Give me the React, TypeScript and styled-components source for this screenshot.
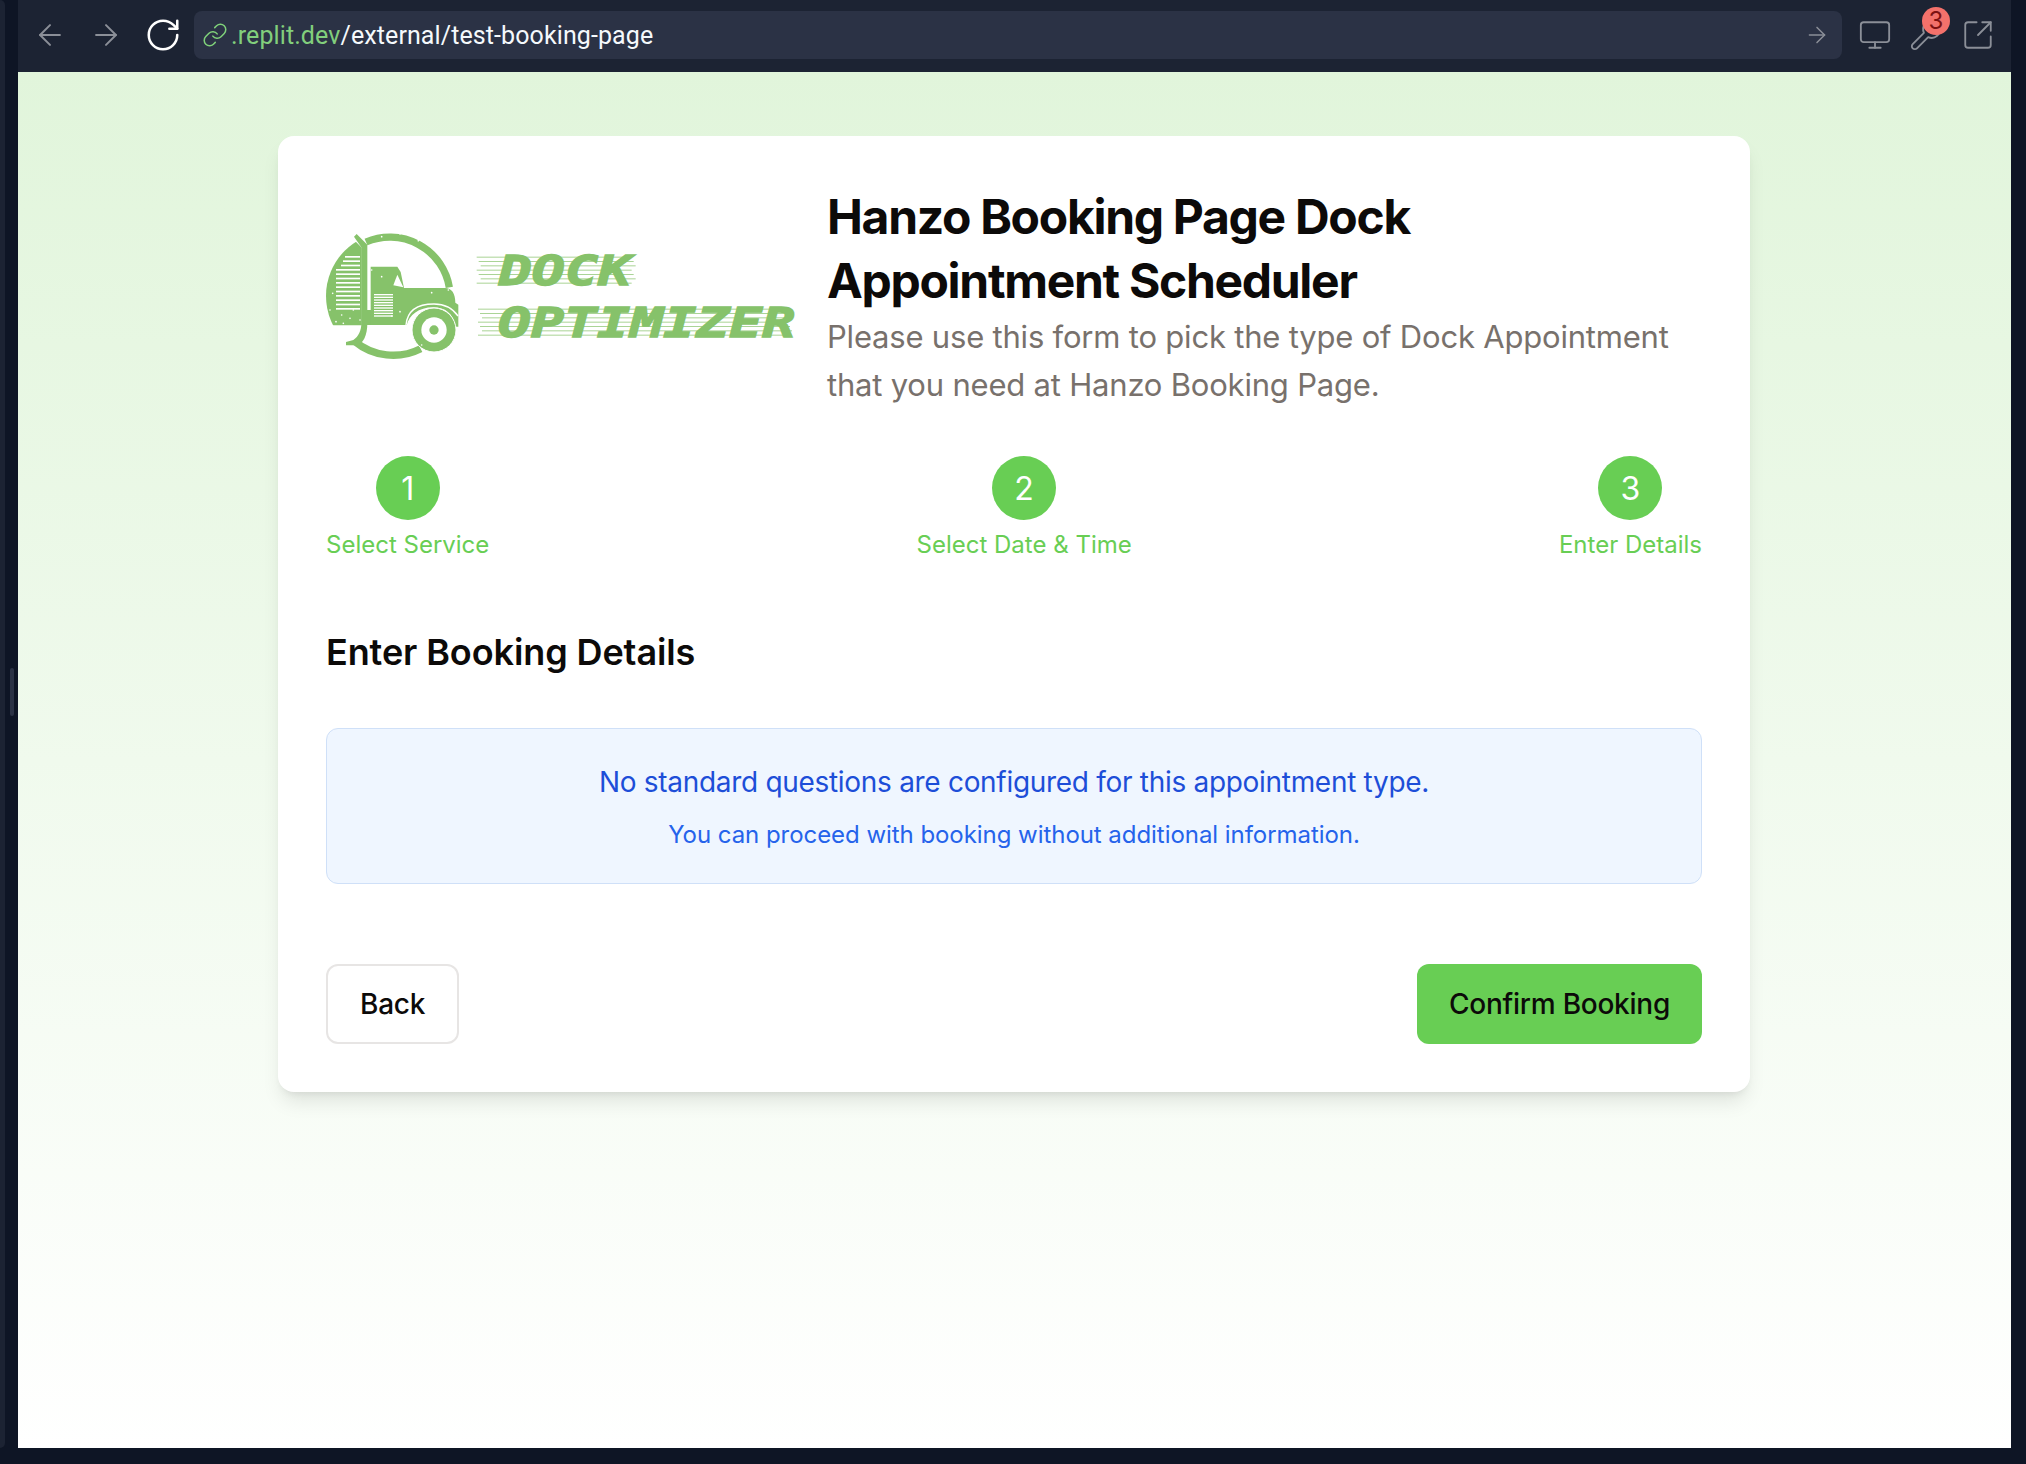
import React from 'react';
import styled, { createGlobalStyle } from 'styled-components';
import { ArrowLeft, ArrowRight, RotateCw, Link as LinkIcon, Monitor, Wrench, SquareArrowOutUpRight } from 'lucide-react';

const GlobalStyle = createGlobalStyle`
  html, body { margin: 0; padding: 0; background: #0e1525; }
  * { box-sizing: border-box; }
`;

const Frame = styled.div`
  display: flex;
  width: 2026px;
  height: 1464px;
  background: #0e1525;
  font-family: Inter, "Liberation Sans", sans-serif;
  overflow: hidden;
`;

const Rail = styled.div`
  width: 5px;
  height: 1448px;
  background: #1c2333;
  border-radius: 0 6px 6px 0;
`;

const Gutter = styled.div`
  width: 13px;
  height: 1448px;
  display: flex;
  align-items: center;
  justify-content: center;
  padding-left: 1px;
  padding-bottom: 64px;
`;

const Handle = styled.div`
  width: 4px;
  height: 48px;
  border-radius: 2px;
  background: #2b3245;
`;

const Browser = styled.div`
  width: 1993px;
  height: 1448px;
  display: flex;
  flex-direction: column;
`;

const Toolbar = styled.div`
  height: 72px;
  flex: none;
  display: flex;
  align-items: center;
  background: #1c2333;
  padding: 0 0 2px 14px;
`;

const NavButton = styled.div<{ $width: number; $active?: boolean }>`
  width: ${p => p.$width}px;
  height: 48px;
  flex: none;
  display: flex;
  align-items: center;
  justify-content: center;
  color: ${p => (p.$active ? '#fff' : '#8b8f98')};
`;

const UrlBar = styled.div`
  width: 1648px;
  height: 48px;
  flex: none;
  margin-left: 12px;
  display: flex;
  align-items: center;
  padding: 0 12px 0 8px;
  background: #2b3245;
  border-radius: 8px;
  color: #7fd17a;
`;

const UrlText = styled.div`
  flex: 1;
  margin-left: 3px;
  font-family: Roboto, sans-serif;
  font-size: 25px;
  letter-spacing: 0.1px;
  color: #f5f9fc;
  white-space: nowrap;
`;

const UrlHost = styled.span`
  color: #82cf7c;
`;

const ToolIcon = styled.div<{ $width: number }>`
  position: relative;
  width: ${p => p.$width}px;
  height: 48px;
  flex: none;
  display: flex;
  align-items: center;
  justify-content: center;
  color: #8b8f98;
`;

const Badge = styled.div`
  position: absolute;
  left: 15px;
  top: -4px;
  width: 28px;
  height: 28px;
  border-radius: 50%;
  background: #f3716b;
  color: #7d1212;
  font-size: 24px;
  line-height: 28px;
  text-align: center;
`;

const Page = styled.div`
  flex: 1;
  display: flex;
  flex-direction: column;
  align-items: center;
  padding: 64px 1px 0 0;
  background: linear-gradient(to bottom, #e1f5db 0%, #ffffff 100%);
`;

const Card = styled.div`
  width: 1472px;
  padding: 49px 48px 48px;
  display: flex;
  flex-direction: column;
  background: #fff;
  border-radius: 16px;
  box-shadow: 0 13px 20px -4px rgba(0, 0, 0, 0.1), 0 5px 8px -5px rgba(0, 0, 0, 0.1);
`;

const Header = styled.div`
  display: flex;
  align-items: center;
  gap: 31px;
`;

const Logo = styled.svg`
  flex: none;
  width: 470px;
  height: 170px;
  margin-top: -4px;
`;

const HeaderText = styled.div`
  flex: 1;
`;

const Title = styled.h1`
  margin: 0;
  font-size: 48px;
  line-height: 64px;
  font-weight: 700;
  letter-spacing: -1.3px;
  color: #0c0a09;
`;

const Description = styled.p`
  margin: 0;
  font-size: 31px;
  line-height: 48px;
  letter-spacing: -0.2px;
  color: #78716c;
`;

const Steps = styled.div`
  display: flex;
  justify-content: space-between;
  margin-top: 47px;
`;

const Step = styled.div`
  display: flex;
  flex-direction: column;
  align-items: center;
  gap: 9px;
`;

const StepCircle = styled.div`
  width: 64px;
  height: 64px;
  border-radius: 50%;
  display: flex;
  align-items: center;
  justify-content: center;
  background: #68ce54;
  color: #fff;
  font-size: 32px;
`;

const StepLabel = styled.div`
  font-size: 24px;
  line-height: 32px;
  color: #68ce54;
`;

const Heading = styled.h2`
  margin: 71px 0 0;
  font-size: 36px;
  line-height: 40px;
  font-weight: 600;
  letter-spacing: -0.1px;
  color: #0c0a09;
`;

const InfoBox = styled.div`
  margin-top: 56px;
  height: 156px;
  display: flex;
  flex-direction: column;
  align-items: center;
  justify-content: center;
  gap: 17px;
  background: #eff6ff;
  border: 1.5px solid #cfe0f8;
  border-radius: 12px;
`;

const InfoMain = styled.div`
  font-size: 28px;
  line-height: 40px;
  letter-spacing: -0.3px;
  color: #1d4ed8;
`;

const InfoSub = styled.div`
  font-size: 24px;
  line-height: 32px;
  letter-spacing: -0.05px;
  color: #2563eb;
`;

const Actions = styled.div`
  display: flex;
  justify-content: space-between;
  margin-top: 80px;
`;

const Button = styled.button<{ $primary?: boolean }>`
  height: 80px;
  padding: 0 32px;
  font-family: inherit;
  font-size: 28px;
  font-weight: 450;
  letter-spacing: -0.25px;
  color: #0c0a09;
  background: ${p => (p.$primary ? '#68ce54' : '#fff')};
  border: ${p => (p.$primary ? 'none' : '2px solid #e7e5e4')};
  border-radius: 12px;
`;

const logoGreen = '#86c26a';

const stripes = (count: number, step: number) => Array.from({ length: count }, (_, i) => i * step);

const specks: [number, number][] = [
  [215, 80], [325, 92], [270, 72], [68, 250], [60, 300], [95, 315], [120, 325], [78, 335], [130, 300],
  [215, 200], [365, 248], [415, 240], [245, 318], [270, 305], [335, 405], [185, 180], [100, 340], [150, 330],
];

const TruckLogo = () => (
  <Logo viewBox="48 0 1410 510">
    <defs>
      <clipPath id="disc-left">
        <path d="M48 60H155V346H48Z" />
      </clipPath>
    </defs>
    {/* ring */}
    <path d="M168 96A181 181 0 0 1 418 232" fill="none" stroke={logoGreen} strokeWidth="22" />
    <path d="M134 394A181 181 0 0 0 332 416" fill="none" stroke={logoGreen} strokeWidth="22" />
    {/* left half with stripes */}
    <circle cx="240" cy="258" r="192" fill={logoGreen} clipPath="url(#disc-left)" />
    <path d="M130 88L160 118V70H130Z" fill="#fff" />
    {stripes(13, 13).map((d, i) => (
      <rect key={i} x={i < 3 ? 105 - i * 6 : 78} y={138 + d} width={i < 3 ? 45 + i * 6 : 72} height="5" fill="#fff" />
    ))}
    {/* exhaust */}
    <path d="M132 80L140 72L172 104V340C172 375 160 402 140 406H108V396L130 390C146 380 154 362 154 340V112Z" fill={logoGreen} />
    {/* chassis */}
    <path d="M155 300H290V345H155Z" fill={logoGreen} />
    {/* cab and hood */}
    <path d="M182 170H262L272 186L282 234H405C425 234 436 250 436 278L445 284V350H436C430 310 405 292 370 292C325 292 298 316 290 345H182Z" fill={logoGreen} />
    <path d="M250 226L262 194L280 232Z" fill="#fff" />
    <path d="M288 345C292 300 325 282 372 282C405 282 428 295 444 318" fill="none" stroke="#fff" strokeWidth="4" />
    {stripes(9, 8).map((d, i) => (
      <rect key={i} x="192" y={252 + d} width="57" height="4" fill="#fff" />
    ))}
    {/* wheel */}
    <circle cx="372" cy="360" r="66" fill={logoGreen} stroke="#fff" strokeWidth="3" />
    <circle cx="372" cy="360" r="38" fill="#fff" />
    <circle cx="372" cy="360" r="14" fill={logoGreen} />
    {specks.map(([x, y], i) => (
      <circle key={i} cx={x} cy={y} r="2.5" fill="#fff" />
    ))}
    {/* speed lines */}
    {stripes(7, 13).map((d, i) => (
      <rect key={i} x={500 + (i % 3) * 6} y={140 + d} width="465" height="3" fill={logoGreen} opacity="0.7" />
    ))}
    {stripes(7, 13).map((d, i) => (
      <rect key={i} x={504 + (i % 3) * 6} y={296 + d} width="930" height="3" fill={logoGreen} opacity="0.7" />
    ))}
    <text
      x="566" y="224" textLength="398" lengthAdjust="spacingAndGlyphs"
      fontFamily="'DejaVu Sans Mono', monospace" fontWeight="700" fontStyle="italic" fontSize="124"
      fill={logoGreen} stroke={logoGreen} strokeWidth="4"
    >
      DOCK
    </text>
    <text
      x="564" y="380" textLength="892" lengthAdjust="spacingAndGlyphs"
      fontFamily="'DejaVu Sans Mono', monospace" fontWeight="700" fontStyle="italic" fontSize="124"
      fill={logoGreen} stroke={logoGreen} strokeWidth="4"
    >
      OPTIMIZER
    </text>
  </Logo>
);

const App = () => {
  return (
    <Frame>
      <GlobalStyle />
      <Rail />
      <Gutter>
        <Handle />
      </Gutter>
      <Browser>
        <Toolbar>
          <NavButton $width={36}><ArrowLeft size={34} strokeWidth={1.4} /></NavButton>
          <NavButton $width={76}><ArrowRight size={34} strokeWidth={1.4} /></NavButton>
          <NavButton $width={38} $active><RotateCw size={38} strokeWidth={1.6} /></NavButton>
          <UrlBar>
            <LinkIcon size={26} strokeWidth={1.4} />
            <UrlText><UrlHost>.replit.dev</UrlHost>/external/test-booking-page</UrlText>
            <ArrowRight size={26} strokeWidth={1.4} color="#8b8f98" />
          </UrlBar>
          <ToolIcon $width={65}><Monitor size={34} strokeWidth={1.3} /></ToolIcon>
          <ToolIcon $width={38}>
            <Wrench size={34} strokeWidth={1.3} />
            <Badge>3</Badge>
          </ToolIcon>
          <ToolIcon $width={66}><SquareArrowOutUpRight size={34} strokeWidth={1.3} /></ToolIcon>
        </Toolbar>
        <Page>
          <Card>
            <Header>
              <TruckLogo />
              <HeaderText>
                <Title>Hanzo Booking Page Dock Appointment Scheduler</Title>
                <Description>Please use this form to pick the type of Dock Appointment that you need at Hanzo Booking Page.</Description>
              </HeaderText>
            </Header>
            <Steps>
              <Step><StepCircle>1</StepCircle><StepLabel>Select Service</StepLabel></Step>
              <Step><StepCircle>2</StepCircle><StepLabel>Select Date &amp; Time</StepLabel></Step>
              <Step><StepCircle>3</StepCircle><StepLabel>Enter Details</StepLabel></Step>
            </Steps>
            <Heading>Enter Booking Details</Heading>
            <InfoBox>
              <InfoMain>No standard questions are configured for this appointment type.</InfoMain>
              <InfoSub>You can proceed with booking without additional information.</InfoSub>
            </InfoBox>
            <Actions>
              <Button>Back</Button>
              <Button $primary>Confirm Booking</Button>
            </Actions>
          </Card>
        </Page>
      </Browser>
    </Frame>
  );
};

export default App;
